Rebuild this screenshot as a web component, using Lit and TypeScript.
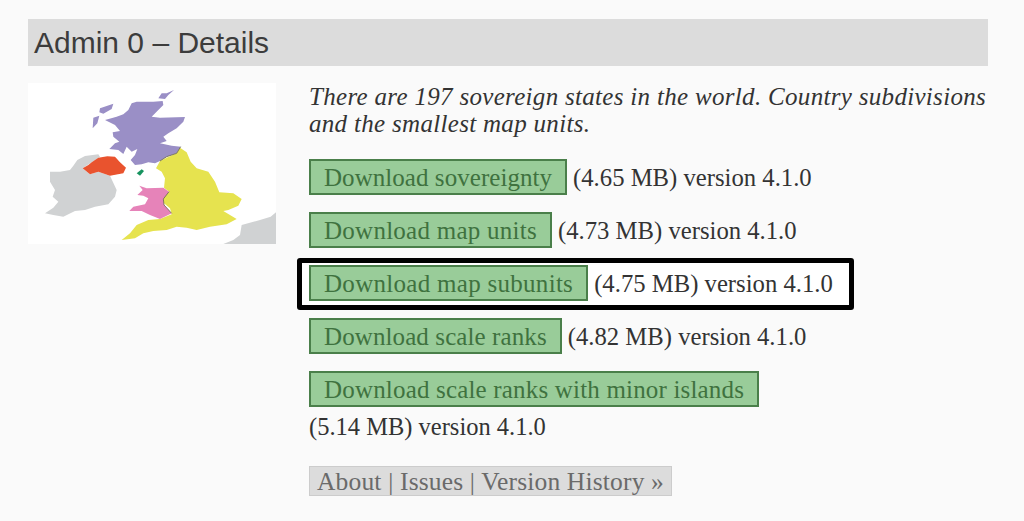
import { LitElement, html, css, svg } from "lit";
import { customElement } from "lit/decorators.js";

const rows = [
  { label: "Download sovereignty", size: "(4.65 MB) version 4.1.0", track: 0.05 },
  { label: "Download map units", size: "(4.73 MB) version 4.1.0", track: 0.26 },
  { label: "Download map subunits", size: "(4.75 MB) version 4.1.0", track: 0.29, hi: true },
  { label: "Download scale ranks", size: "(4.82 MB) version 4.1.0", track: 0.1 },
];

@customElement("app-root")
export class AppRoot extends LitElement {
  static styles = css`
    :host { display: block; width: 1024px; height: 521px; background: #fafafa; overflow: hidden; box-sizing: border-box; padding: 19px 36px 0 28px; font-family: "Liberation Serif", serif; color: #333; }
    h1 { margin: 0; height: 47px; background: #dcdcdc; font: 400 30px/47px "Liberation Sans", Arial, sans-serif; color: #3c3c3c; padding-left: 6px; }
    .body { display: flex; margin-top: 17px; }
    .map { width: 248px; height: 161px; display: block; background: #fff; flex: none; }
    .right { margin-left: 33px; flex: 1; min-width: 0; }
    p { margin: 0; font-style: italic; font-size: 25px; line-height: 27px; letter-spacing: 0.31px; }
    .rows { display: flex; flex-direction: column; align-items: flex-start; gap: 17px; margin-top: 22px; }
    .row { display: flex; align-items: center; gap: 6px; height: 36px; font-size: 24.7px; white-space: nowrap; }
    .hi { position: relative; }
    .hi::before { content: ""; position: absolute; left: -12px; top: -7px; right: -21px; bottom: -9px; background: #fff; border: 5px solid #000; border-radius: 3px; box-sizing: border-box; }
    .hi > * { position: relative; }
    .size { padding-top: 2px; }
    .btn { box-sizing: border-box; height: 36px; line-height: 34px; padding: 0 13px; background: #99cc99; border: 2px solid #4a7f4a; color: #3f723f; font-size: 25px; letter-spacing: 0.18px; white-space: nowrap; }
    .tail { font-size: 24.5px; line-height: 27px; margin-top: 6px; }
    .links { display: inline-block; box-sizing: border-box; height: 30px; line-height: 29px; margin-top: 26px; padding: 0 7px; background: #dcdcdc; border: 1px solid #cccccc; color: #6a6a6a; font-size: 25.5px; letter-spacing: 0.17px; white-space: nowrap; }
  `;

  private map() {
    return svg`
      <svg class="map" viewBox="24 24 744 483" xmlns="http://www.w3.org/2000/svg">
        <defs><filter id="b"><feGaussianBlur stdDeviation="1.8"/></filter></defs>
        <g filter="url(#b)">
          <path fill="#d0d2d3" d="M160 272 172 255 195 243 235 238 240 245 215 262 188 280 210 298 235 290 270 302 290 345 285 365 265 388 225 395 195 405 165 408 130 425 100 420 75 415 100 398 115 380 98 365 105 345 90 320 90 290 120 290 150 285Z"/>
          <path fill="#d0d2d3" d="M610 507 640 495 660 480 665 450 720 435 752 425 768 412V507Z"/>
          <path fill="#9a8fc6" d="M335 85 350 80 400 80 428 78 430 90 415 105 395 125 420 128 495 126 490 140 470 160 445 175 430 185 440 198 420 205 455 212 482 215 470 235 440 245 420 258 405 265 385 262 365 268 345 270 332 255 345 240 352 222 335 230 320 215 310 237 295 225 268 222 285 205 298 200 280 185 278 172 300 168 285 150 255 135 290 125 310 118 325 105Z"/>
          <path fill="#9a8fc6" d="M415 70 425 55 440 55 462 45 445 60 435 72ZM240 100 280 86 275 102 250 116 238 112ZM218 160 220 128 238 122 232 145Z"/>
          <path fill="#e6e34f" d="M480 218 500 232 512 260 530 280 565 290 585 320 598 352 640 355 665 372 655 392 625 405 610 408 650 432 620 448 570 455 530 465 500 458 470 455 440 465 400 468 370 475 345 490 305 495 330 475 350 450 385 435 420 432 455 418 450 400 432 385 430 370 447 350 432 338 435 310 425 290 408 280 420 258 440 248 470 235Z"/>
          <path fill="#e683b9" d="M358 332 380 340 430 338 447 350 430 372 432 390 455 415 420 432 390 420 365 408 328 408 340 395 375 388 385 370 370 362 352 360 368 345Z"/>
          <path fill="#e9532f" d="M188 280 205 270 215 262 235 248 262 244 285 245 300 262 318 278 310 295 270 302 235 290 210 298Z"/>
          <path fill="#17935f" d="M350 295 365 283 372 288 360 302Z"/>
          <path fill="none" stroke="#6d6a4a" stroke-width="2.5" d="M447 350 430 372 432 390 455 415M482 215 470 235 440 245 420 258"/>
        </g>
      </svg>`;
  }

  render() {
    return html`
      <h1>Admin 0 – Details</h1>
      <div class="body">
        ${this.map()}
        <div class="right">
          <p>There are 197 sovereign states in the world. Country subdivisions and the smallest map units.</p>
          <div class="rows">
            ${rows.map(r => html`
              <div class="row ${r.hi ? "hi" : ""}"><span class="btn" style="letter-spacing:${r.track}px">${r.label}</span><span class="size">${r.size}</span></div>`)}
            <div class="row"><span class="btn">Download scale ranks with minor islands</span></div>
          </div>
          <div class="tail">(5.14 MB) version 4.1.0</div>
          <span class="links">About | Issues | Version History »</span>
        </div>
      </div>
    `;
  }
}
